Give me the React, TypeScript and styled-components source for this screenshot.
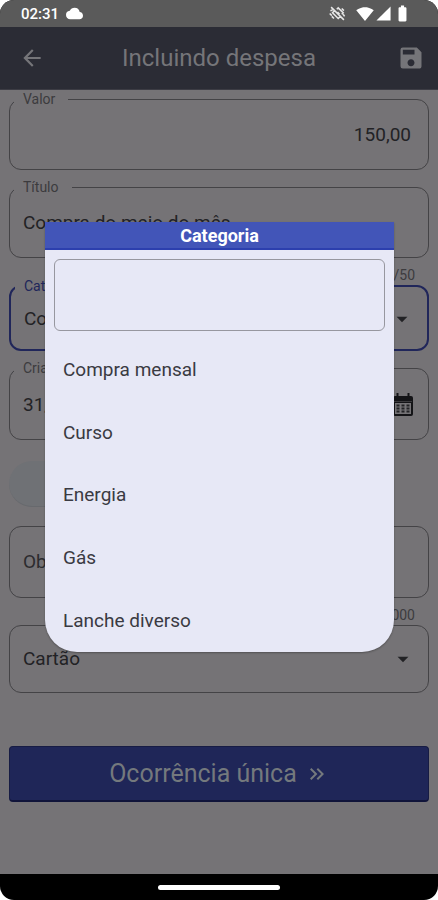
import React from 'react';
import styled, { createGlobalStyle, css } from 'styled-components';
import {
  MdArrowBack,
  MdArrowDropDown,
  MdBatteryFull,
  MdCloud,
  MdKeyboardDoubleArrowRight,
  MdSave,
  MdSignalCellular4Bar,
  MdSignalWifi4Bar,
} from 'react-icons/md';

const color = {
  page: '#757376',
  ink: '#222225',
  label: '#3c3b3e',
  outline: '#444346',
  focus: '#20265a',
  dialog: '#e7e8f6',
};

const GlobalStyle = createGlobalStyle`
  * { box-sizing: border-box; }
  html, body, #root { height: 100%; }
  body { margin: 0; background: #fff; }
  body, button, input { font-family: Roboto, "Liberation Sans", sans-serif; }
`;

const Phone = styled.div`
  display: flex;
  flex-direction: column;
  min-height: 100%;
  border-radius: 14px;
  overflow: hidden;
  background: #000;
`;

const StatusBar = styled.div`
  display: flex;
  align-items: center;
  justify-content: space-between;
  height: 27px;
  padding: 0 26px 0 21px;
  background: #5a5a5a;
  color: #fff;
`;

const StatusGroup = styled.div<{ $gap: number }>`
  display: flex;
  align-items: center;
  gap: ${(p) => p.$gap}px;
`;

const Clock = styled.time`
  font-size: 15px;
  line-height: 28px;
  font-weight: 500;
`;

const Screen = styled.div`
  position: relative;
  flex: 1;
  display: flex;
  flex-direction: column;
  background: ${color.page};
`;

const AppBar = styled.header`
  display: grid;
  grid-template-columns: 38px 1fr 38px;
  align-items: center;
  height: 63px;
  padding: 0 13px;
  background: #2b2c35;
  border-bottom: 1px solid #3c3c44;
  color: #757579;
`;

const PageTitle = styled.h1`
  margin: 0;
  font-size: 24px;
  line-height: 32px;
  font-weight: 400;
  text-align: center;
`;

const IconButton = styled.button<{ $end?: boolean }>`
  display: grid;
  place-items: center ${(p) => (p.$end ? 'end' : 'center')};
  padding: 0;
  border: 0;
  background: none;
  color: inherit;
`;

const Form = styled.form`
  display: flex;
  flex-direction: column;
  padding: 2px 9px 72px;
`;

const Outline = styled.fieldset<{ $focused?: boolean; $plain?: boolean; $top?: number }>`
  min-width: 0;
  margin: ${(p) => p.$top ?? 0}px 0 0;
  padding: 0 0 ${(p) => (p.$plain ? 0 : 5)}px;
  border: 1px solid ${color.outline};
  border-radius: 12px;
  color: ${color.label};
  ${(p) =>
    p.$focused &&
    css`
      border: 2px solid ${color.focus};
      color: ${color.focus};
    `}
`;

const Legend = styled.legend`
  margin-left: 4px;
  padding: 0 13px 0 9px;
  font-size: 14px;
  line-height: 14px;
`;

const FieldBody = styled.div<{ $height: number; $select?: boolean }>`
  display: flex;
  align-items: center;
  height: ${(p) => p.$height}px;
  padding: 0 ${(p) => (p.$select ? 12 : 14)}px 0 13px;
  color: ${color.ink};
`;

const TextInput = styled.input<{ $end?: boolean }>`
  flex: 1;
  min-width: 0;
  padding: 0 3px 0 0;
  border: 0;
  outline: 0;
  background: none;
  color: inherit;
  font-size: 19px;
  line-height: 24px;
  text-align: ${(p) => (p.$end ? 'right' : 'left')};
  &::placeholder { color: #2c2c2f; opacity: 1; }
`;

const Counter = styled.div<{ $height: number }>`
  height: ${(p) => p.$height}px;
  padding: 9px 14px 0 0;
  color: ${color.label};
  font-size: 14px;
  line-height: 16px;
  text-align: right;
`;

const DropButton = styled.button`
  flex: 1;
  display: flex;
  align-items: center;
  justify-content: space-between;
  padding: 0;
  border: 0;
  background: none;
  color: inherit;
  font-size: 19px;
  line-height: 24px;
`;

const Chip = styled.button`
  width: 60%;
  height: 46px;
  margin: 21px 0 19px;
  border: 0;
  border-bottom: 1px solid #67696d;
  border-radius: 23px;
  background: #6f7175;
`;

const SubmitButton = styled.button`
  display: flex;
  align-items: center;
  justify-content: center;
  gap: 8px;
  height: 56px;
  margin-top: 53px;
  border: 1px solid #171c44;
  border-bottom: 2px solid #10143a;
  border-radius: 4px;
  background: #1f2658;
  color: #74797d;
  font-size: 25px;
  line-height: 32px;
`;

const Scrim = styled.div`
  position: absolute;
  inset: -27px 0 0;
  display: grid;
  place-items: center;
  padding: 0 44px 0 45px;
`;

const Dialog = styled.section`
  width: 100%;
  border-radius: 0 0 32px 32px;
  overflow: hidden;
  background: ${color.dialog};
  box-shadow: 0 1px 2px rgba(0, 0, 0, 0.3);
`;

const DialogTitle = styled.h2`
  height: 28px;
  margin: 0;
  border-bottom: 2px solid #2c3fae;
  background: #4255b8;
  color: #fff;
  font-size: 18px;
  line-height: 28px;
  font-weight: 700;
  text-align: center;
`;

const SearchInput = styled.input`
  display: block;
  width: calc(100% - 18px);
  height: 72px;
  margin: 9px 9px 8px;
  padding: 0 12px;
  border: 1px solid #97979f;
  border-radius: 6px;
  outline: 0;
  background: none;
  font-size: 19px;
`;

const OptionList = styled.ul`
  display: grid;
  grid-auto-rows: 1fr;
  height: 313px;
  margin: 0;
  padding: 0;
  list-style: none;
`;

const Option = styled.button`
  width: 100%;
  height: 100%;
  padding: 0 18px;
  border: 0;
  background: none;
  color: #3a3a42;
  font-size: 19px;
  line-height: 24px;
  text-align: left;
`;

const NavBar = styled.div`
  display: grid;
  place-items: center;
  height: 26px;
`;

const HomeHandle = styled.div`
  width: 28%;
  height: 5px;
  border-radius: 3px;
  background: #fff;
`;

const VibrationOff = () => (
  <svg width="17" height="17" viewBox="0 0 24 24" fill="none" stroke="#e6e6e6" strokeWidth="2.2" aria-hidden="true">
    <path d="M3 3l18 18M8 8l-3 3 8 8 3-3M11 6l2-2 7 7-2 2M12 10l3 3M2 8l3-1M1 12l3 3M4 16l3 3M18 5l3 3M20 13l2 3" />
  </svg>
);

const CalendarIcon = () => (
  <svg width="22" height="24" viewBox="0 0 22 24" aria-hidden="true">
    <rect x="1" y="3" width="20" height="20" rx="2" fill="#141417" />
    <path d="M5.500 0v4M16.500 0v4" stroke="#141417" strokeWidth="2" />
    <path d="M2 8.500h18" stroke="#3a393c" strokeWidth="1" />
    <rect x="3" y="10" width="16" height="11" fill="#757376" />
    <path stroke="#222225" strokeWidth="2" strokeDasharray="3 2" d="M4.500 12.500h13M4.500 15.500h13M4.500 18.500h13" />
  </svg>
);

const categories = ['Compra mensal', 'Curso', 'Energia', 'Gás', 'Lanche diverso'];

export default function App() {
  return (
    <>
      <GlobalStyle />
      <Phone>
        <StatusBar>
          <StatusGroup $gap={7}>
            <Clock>02:31</Clock>
            <MdCloud size={17} />
          </StatusGroup>
          <StatusGroup $gap={10}>
            <VibrationOff />
            <StatusGroup $gap={1}>
              <MdSignalWifi4Bar size={18} />
              <MdSignalCellular4Bar size={17} />
              <MdBatteryFull size={19} />
            </StatusGroup>
          </StatusGroup>
        </StatusBar>
        <Screen>
          <AppBar>
            <IconButton aria-label="Voltar"><MdArrowBack size={26} /></IconButton>
            <PageTitle>Incluindo despesa</PageTitle>
            <IconButton $end aria-label="Salvar"><MdSave size={28} /></IconButton>
          </AppBar>
          <Form>
            <Outline>
              <Legend><label htmlFor="valor">Valor</label></Legend>
              <FieldBody $height={58}><TextInput id="valor" $end defaultValue="150,00" /></FieldBody>
            </Outline>
            <Outline $top={10}>
              <Legend><label htmlFor="titulo">Título</label></Legend>
              <FieldBody $height={58}><TextInput id="titulo" defaultValue="Compra do meio do mês" /></FieldBody>
            </Outline>
            <Counter $height={21}>21/50</Counter>
            <Outline $focused>
              <Legend><label htmlFor="categoria">Categoria</label></Legend>
              <FieldBody $select $height={51}>
                <DropButton id="categoria" type="button">Compra mensal<MdArrowDropDown size={26} /></DropButton>
              </FieldBody>
            </Outline>
            <Outline $top={10}>
              <Legend><label htmlFor="criacao">Criação</label></Legend>
              <FieldBody $height={59}>
                <TextInput id="criacao" defaultValue="31/05/2024" />
                <IconButton type="button" aria-label="Abrir calendário"><CalendarIcon /></IconButton>
              </FieldBody>
            </Outline>
            <Chip type="button" aria-label="Pago" />
            <Outline $plain>
              <FieldBody $height={70}><TextInput aria-label="Observação" placeholder="Observação" /></FieldBody>
            </Outline>
            <Counter $height={27}>0/1000</Counter>
            <Outline $plain>
              <FieldBody $select $height={66}>
                <DropButton type="button">Cartão<MdArrowDropDown size={26} /></DropButton>
              </FieldBody>
            </Outline>
            <SubmitButton type="button">Ocorrência única<MdKeyboardDoubleArrowRight size={24} /></SubmitButton>
          </Form>
          <Scrim>
            <Dialog role="dialog" aria-labelledby="dialog-title">
              <DialogTitle id="dialog-title">Categoria</DialogTitle>
              <SearchInput aria-label="Pesquisar categoria" />
              <OptionList>
                {categories.map((name) => (
                  <li key={name}><Option type="button">{name}</Option></li>
                ))}
              </OptionList>
            </Dialog>
          </Scrim>
        </Screen>
        <NavBar><HomeHandle /></NavBar>
      </Phone>
    </>
  );
}
